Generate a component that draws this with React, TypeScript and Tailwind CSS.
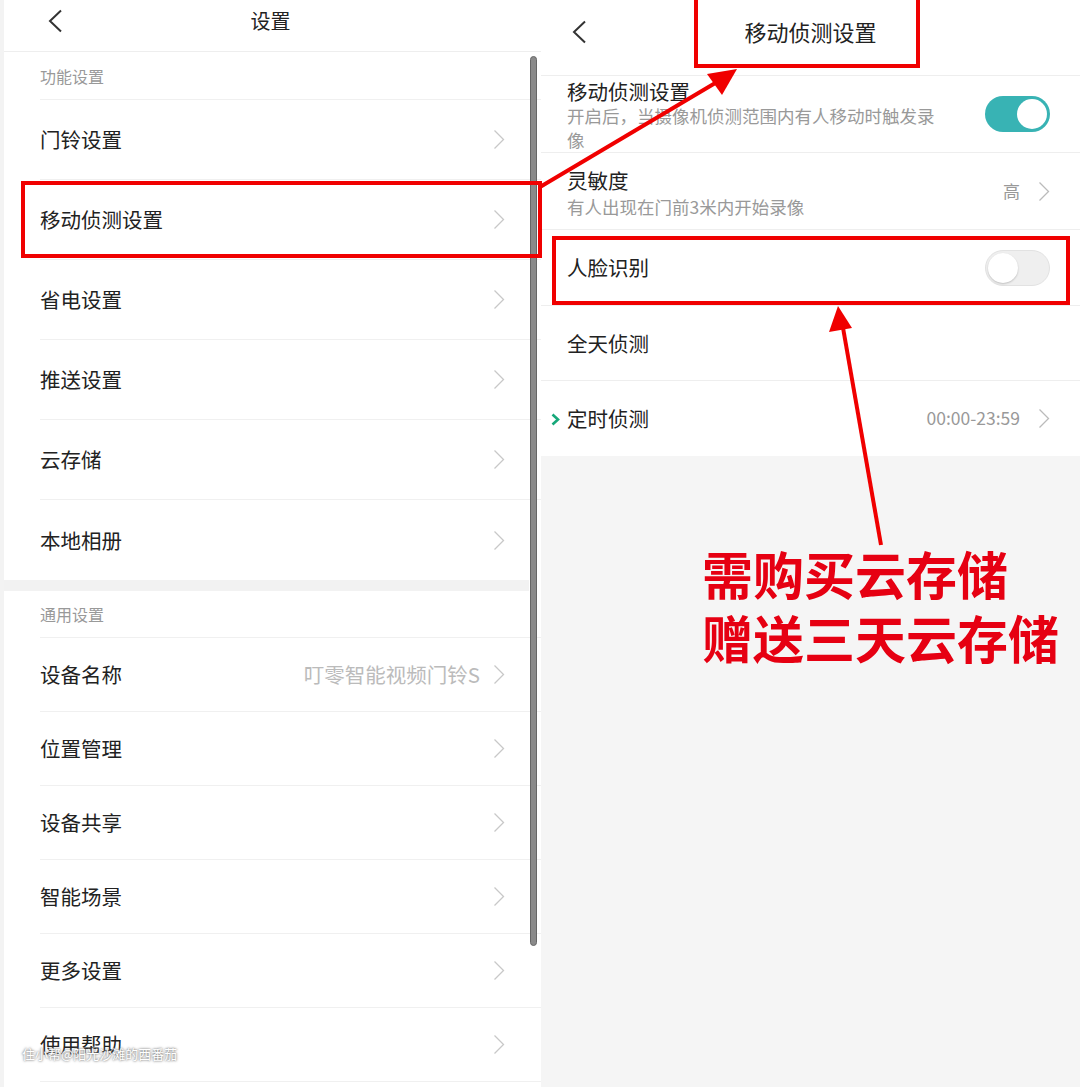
import React from 'react'

const font = { fontFamily: '"Noto Sans CJK SC", "Noto Sans", sans-serif' }

function Chevron({ className = '' }: { className?: string }) {
  return (
    <svg width="12" height="21" viewBox="0 0 12 21" className={className}>
      <path d="M1.5 1.5 L10.5 10.5 L1.5 19.5" fill="none" stroke="currentColor" strokeWidth="1.3" />
    </svg>
  )
}

function Back() {
  return (
    <svg width="16" height="24" viewBox="0 0 16 24">
      <path d="M14 1.5 L3 12 L14 22.5" fill="none" stroke="#333" strokeWidth="2" />
    </svg>
  )
}

const group1 = ['门铃设置', '移动侦测设置', '省电设置', '推送设置', '云存储', '本地相册']
const group2: { label: string; value?: string }[] = [
  { label: '设备名称', value: '叮零智能视频门铃S' },
  { label: '位置管理' },
  { label: '设备共享' },
  { label: '智能场景' },
  { label: '更多设置' },
  { label: '使用帮助' },
]

function LeftPanel() {
  return (
    <div className="relative w-[541px] h-full bg-white border-l-4 border-[#f3f3f3]">
      <div className="relative h-[52px] flex items-center justify-center border-b border-[#eeeeee]">
        <div className="absolute left-[43px] top-[9px]"><Back /></div>
        <span className="text-[20px] text-[#222] -ml-[4px] -mt-[10px]">设置</span>
      </div>
      <div className="h-[47px] flex items-center pl-[36px] text-[16px] text-[#999]">功能设置</div>
      <div className="ml-[36px] border-t border-[#f0f0f0]">
        {group1.map(t => (
          <div key={t} className="h-[80px] flex items-center justify-between pr-[36px] border-b border-[#f0f0f0] last:border-b-0">
            <span className="text-[20.5px] text-[#222]">{t}</span>
            <Chevron className="text-[#c8c8c8]" />
          </div>
        ))}
      </div>
      <div className="h-[11px] mr-[12px] bg-[#f2f2f2]" />
      <div className="h-[46px] flex items-center pl-[36px] text-[16px] text-[#999]">通用设置</div>
      <div className="ml-[36px] border-t border-[#f0f0f0]">
        {group2.map(r => (
          <div key={r.label} className="h-[74px] flex items-center justify-between pr-[36px] border-b border-[#f0f0f0]">
            <span className="text-[20.5px] text-[#222]">{r.label}</span>
            <div className="flex items-center gap-[13px]">
              {r.value && <span className="text-[20.5px] text-[#bbbbbb]">{r.value}</span>}
              <Chevron className="text-[#c8c8c8]" />
            </div>
          </div>
        ))}
      </div>
      {/* scrollbar */}
      <div className="absolute left-[526px] top-[56px] w-[7px] h-[890px] rounded-full bg-[#8a8a8a] border border-[#666]" />
      {/* watermark */}
      <div className="absolute left-[18px] top-[1044px] text-[13px] text-white [text-shadow:0_0_2px_#777,0_0_3px_#999]">住小帮@阳光沙滩的西番茄</div>
    </div>
  )
}

function Toggle({ on }: { on: boolean }) {
  return on ? (
    <div className="w-[65px] h-[36px] rounded-full bg-[#38b3b4] flex items-center justify-end pr-[3px]">
      <div className="w-[30px] h-[30px] rounded-full bg-white" />
    </div>
  ) : (
    <div className="w-[65px] h-[36px] rounded-full bg-[#efefef] border border-[#e2e2e2] flex items-center pl-[2px]">
      <div className="w-[30px] h-[30px] rounded-full bg-white shadow-[0_1px_2px_rgba(0,0,0,0.2)]" />
    </div>
  )
}

function RightPanel() {
  return (
    <div className="w-[539px] h-full bg-[#f5f5f5] flex flex-col">
      <div className="relative h-[76px] bg-white flex items-center justify-center border-b border-[#eeeeee]">
        <div className="absolute left-[30px] top-[20px]"><Back /></div>
        <span className="text-[22px] text-[#222] mt-[-12px]">移动侦测设置</span>
      </div>
      <div className="bg-white">
        <div className="h-[77px] flex items-start justify-between pl-[26px] pr-[30px] border-b border-[#eeeeee]">
          <div className="pt-[2px]">
            <div className="text-[20.5px] leading-[26px] text-[#222]">移动侦测设置</div>
            <div className="text-[17.5px] leading-[24px] text-[#999]">开启后，当摄像机侦测范围内有人移动时触发录<br />像</div>
          </div>
          <div className="pt-[20px]"><Toggle on /></div>
        </div>
        <div className="h-[77px] flex items-center justify-between pl-[26px] pr-[30px] border-b border-[#eeeeee]">
          <div className="mt-[4px]">
            <div className="text-[20.5px] leading-[26px] text-[#222]">灵敏度</div>
            <div className="text-[17.5px] leading-[27px] text-[#999]">有人出现在门前3米内开始录像</div>
          </div>
          <div className="flex items-center gap-[18px]">
            <span className="text-[17px] text-[#999]">高</span>
            <Chevron className="text-[#bbbbbb]" />
          </div>
        </div>
        <div className="h-[76px] flex items-center justify-between pl-[26px] pr-[30px] border-b border-[#eeeeee]">
          <span className="text-[20.5px] text-[#222]">人脸识别</span>
          <Toggle on={false} />
        </div>
        <div className="h-[75px] flex items-center pl-[26px] border-b border-[#eeeeee]">
          <span className="text-[20.5px] text-[#222]">全天侦测</span>
        </div>
        <div className="relative h-[75px] flex items-center justify-between pl-[26px] pr-[30px]">
          <svg width="9" height="13" viewBox="0 0 9 13" className="absolute left-[10px] top-[32px]">
            <path d="M1.5 1.5 L7 6.5 L1.5 11.5" fill="none" stroke="#16a87a" strokeWidth="2.6" />
          </svg>
          <span className="text-[20.5px] text-[#222]">定时侦测</span>
          <div className="flex items-center gap-[18px]">
            <span className="text-[17.5px] text-[#999]">00:00-23:59</span>
            <Chevron className="text-[#bbbbbb]" />
          </div>
        </div>
      </div>
      <div className="pt-[85px] pl-[161px] font-bold text-[51px] leading-[64px] text-[#e60012]">
        <div className="h-[64px] flex items-center">需购买云存储</div>
        <div className="h-[64px] flex items-center">赠送三天云存储</div>
      </div>
    </div>
  )
}

export default function App() {
  return (
    <div className="relative w-[1080px] h-[1087px] overflow-hidden bg-white flex" style={font}>
      <LeftPanel />
      <RightPanel />
      {/* annotations */}
      <div className="absolute left-[21px] top-[181px] w-[521px] h-[77px] border-[4px] border-[#f00000]" />
      <div className="absolute left-[694px] top-[-4px] w-[226px] h-[72px] border-[4px] border-[#f00000]" />
      <div className="absolute left-[552px] top-[236px] w-[518px] h-[69px] border-[4px] border-[#f00000]" />
      <svg className="absolute left-0 top-0" width="1080" height="1087" viewBox="0 0 1080 1087">
        <line x1="540" y1="187" x2="722" y2="79" stroke="#f00000" strokeWidth="4" />
        <polygon points="737,69 707,74 722,95" fill="#f00000" />
        <line x1="881" y1="545" x2="842" y2="322" stroke="#f00000" strokeWidth="4" />
        <polygon points="838,306 829,332 852,328" fill="#f00000" />
      </svg>
    </div>
  )
}
